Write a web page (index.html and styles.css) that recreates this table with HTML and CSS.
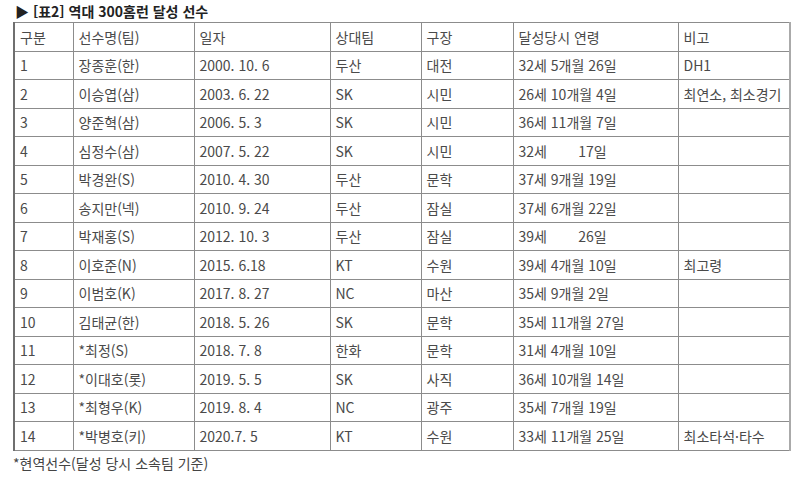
FILE: index.html
```html
<!DOCTYPE html>
<html lang="ko">
<head>
<meta charset="utf-8">
<link rel="stylesheet" href="styles.css">
</head>
<body>
<div class="page">
  <div class="title">▶ [표2] 역대 300홈런 달성 선수</div>
  <table class="record">
    <colgroup>
      <col class="c1"><col class="c2"><col class="c3"><col class="c4"><col class="c5"><col class="c6"><col class="c7">
    </colgroup>
    <tr><td>구분</td><td>선수명(팀)</td><td>일자</td><td>상대팀</td><td>구장</td><td>달성당시 연령</td><td>비고</td></tr>
    <tr><td>1</td><td>장종훈(한)</td><td>2000. 10. 6</td><td>두산</td><td>대전</td><td>32세 5개월 26일</td><td>DH1</td></tr>
    <tr><td>2</td><td>이승엽(삼)</td><td>2003. 6. 22</td><td>SK</td><td>시민</td><td>26세 10개월 4일</td><td>최연소, 최소경기</td></tr>
    <tr><td>3</td><td>양준혁(삼)</td><td>2006. 5. 3</td><td>SK</td><td>시민</td><td>36세 11개월 7일</td><td></td></tr>
    <tr><td>4</td><td>심정수(삼)</td><td>2007. 5. 22</td><td>SK</td><td>시민</td><td>32세&nbsp;&nbsp;&nbsp;&nbsp;&nbsp;&nbsp;&nbsp;&nbsp;17일</td><td></td></tr>
    <tr><td>5</td><td>박경완(S)</td><td>2010. 4. 30</td><td>두산</td><td>문학</td><td>37세 9개월 19일</td><td></td></tr>
    <tr><td>6</td><td>송지만(넥)</td><td>2010. 9. 24</td><td>두산</td><td>잠실</td><td>37세 6개월 22일</td><td></td></tr>
    <tr><td>7</td><td>박재홍(S)</td><td>2012. 10. 3</td><td>두산</td><td>잠실</td><td>39세&nbsp;&nbsp;&nbsp;&nbsp;&nbsp;&nbsp;&nbsp;&nbsp;26일</td><td></td></tr>
    <tr><td>8</td><td>이호준(N)</td><td>2015. 6.18</td><td>KT</td><td>수원</td><td>39세 4개월 10일</td><td>최고령</td></tr>
    <tr><td>9</td><td>이범호(K)</td><td>2017. 8. 27</td><td>NC</td><td>마산</td><td>35세 9개월 2일</td><td></td></tr>
    <tr><td>10</td><td>김태균(한)</td><td>2018. 5. 26</td><td>SK</td><td>문학</td><td>35세 11개월 27일</td><td></td></tr>
    <tr><td>11</td><td>*최정(S)</td><td>2018. 7. 8</td><td>한화</td><td>문학</td><td>31세 4개월 10일</td><td></td></tr>
    <tr><td>12</td><td>*이대호(롯)</td><td>2019. 5. 5</td><td>SK</td><td>사직</td><td>36세 10개월 14일</td><td></td></tr>
    <tr><td>13</td><td>*최형우(K)</td><td>2019. 8. 4</td><td>NC</td><td>광주</td><td>35세 7개월 19일</td><td></td></tr>
    <tr><td>14</td><td>*박병호(키)</td><td>2020.7. 5</td><td>KT</td><td>수원</td><td>33세 11개월 25일</td><td>최소타석·타수</td></tr>
  </table>
  <div class="note">*현역선수(달성 당시 소속팀 기준)</div>
</div>
</body>
</html>
```
FILE: styles.css
```css
html, body {
  margin: 0;
  padding: 0;
  background: #ffffff;
}
body {
  font-family: "Noto Sans CJK KR", "Noto Sans", sans-serif;
  color: #444;
}
.page {
  padding: 0 0 0 13px;
}
.title {
  height: 22px;
  line-height: 22px;
  font-size: 14px;
  font-weight: bold;
  color: #222;
  padding-left: 2px;
}
.record {
  border-collapse: collapse;
  table-layout: fixed;
  width: 776px;
  font-size: 14px;
  color: #4a4a4a;
  border-left: 2px solid #6f6f6f;
  border-right: 2px solid #aaaaaa;
  border-top: 1px solid #777;
}
.c1 { width: 59px; }
.c2 { width: 121px; }
.c3 { width: 136px; }
.c4 { width: 91px; }
.c5 { width: 92px; }
.c6 { width: 165px; }
.c7 { width: 112px; }
.record tr {
  height: 28.5px;
}
.record td {
  border: 1px solid #8c8c8c;
  padding: 0 4px 0 5px;
  line-height: 18px;
  white-space: nowrap;
  overflow: hidden;
}
.record td:first-child {
  border-left: 2px solid #6f6f6f;
}
.record td:last-child {
  border-right: 2px solid #aaaaaa;
}
.note {
  font-size: 14px;
  color: #444;
  line-height: 20px;
  padding-top: 2px;
}
```
